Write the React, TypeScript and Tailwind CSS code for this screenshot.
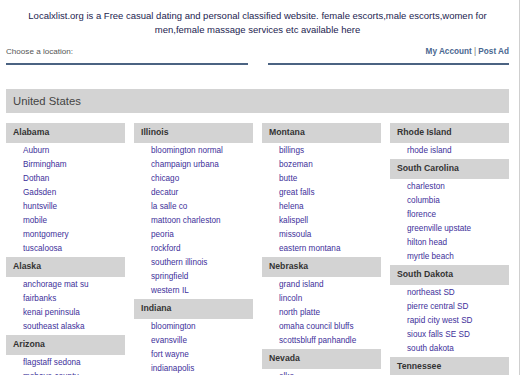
const data: { state: string; cities: string[] }[][] = [
  [
    { state: "Alabama", cities: ["Auburn", "Birmingham", "Dothan", "Gadsden", "huntsville", "mobile", "montgomery", "tuscaloosa"] },
    { state: "Alaska", cities: ["anchorage mat su", "fairbanks", "kenai peninsula", "southeast alaska"] },
    { state: "Arizona", cities: ["flagstaff sedona", "mohave county", "phoenix"] },
  ],
  [
    {
      state: "Illinois",
      cities: ["bloomington normal", "champaign urbana", "chicago", "decatur", "la salle co", "mattoon charleston", "peoria", "rockford", "southern illinois", "springfield", "western IL"],
    },
    { state: "Indiana", cities: ["bloomington", "evansville", "fort wayne", "indianapolis", "kokomo"] },
  ],
  [
    { state: "Montana", cities: ["billings", "bozeman", "butte", "great falls", "helena", "kalispell", "missoula", "eastern montana"] },
    { state: "Nebraska", cities: ["grand island", "lincoln", "north platte", "omaha council bluffs", "scottsbluff panhandle"] },
    { state: "Nevada", cities: ["elko", "las vegas"] },
  ],
  [
    { state: "Rhode Island", cities: ["rhode island"] },
    { state: "South Carolina", cities: ["charleston", "columbia", "florence", "greenville upstate", "hilton head", "myrtle beach"] },
    { state: "South Dakota", cities: ["northeast SD", "pierre central SD", "rapid city west SD", "sioux falls SE SD", "south dakota"] },
    { state: "Tennessee", cities: ["chattanooga", "clarksville"] },
  ],
];

const App: React.FC = () => {
  return (
    <div className="h-[375px] w-[521px] overflow-hidden bg-white font-['Liberation_Sans',Arial,sans-serif]">
      <div className="h-full w-[520px] border-r border-[#cfcfcf] pl-[6px] pr-[10px]">
        {/* intro */}
        <p className="pt-[9px] text-center text-[9.5px] leading-[14px] text-[#23234f]">
          Localxlist.org is a Free casual dating and personal classified website. female escorts,male escorts,women for
          <br />
          men,female massage services etc available here
        </p>

        {/* location bar */}
        <div className="mt-[9px] flex gap-[20px]">
          <div className="w-[242px] border-b-2 border-[#4b6382] pb-[5px] text-[8.1px] leading-[12px] text-[#555]">
            Choose a location:
          </div>
          <div className="w-[242px] border-b-2 border-[#4b6382] pb-[5px] text-right text-[8.2px] font-bold leading-[12px] text-[#4a6790]">
            My Account <span className="font-normal text-[#777]">|</span> Post Ad
          </div>
        </div>

        {/* country */}
        <div className="mt-[24px] flex h-[24px] items-center bg-[#d3d3d3] pl-[7px] text-[11.3px] text-[#444]">
          United States
        </div>

        <div className="mt-[10px] grid grid-cols-4 gap-x-[9px]">
          {data.map((col, i) => (
            <div key={i} className="flex flex-col">
              {col.map((s, j) => (
                <div key={s.state} className={j === 0 ? "" : "mt-[1px]"}>
                  <div className="flex h-[20px] items-center bg-[#d3d3d3] pl-[7px] text-[8.7px] font-bold text-[#333]">
                    {s.state}
                  </div>
                  <ul className="pt-[1px]">
                    {s.cities.map((c) => (
                      <li key={c} className="h-[14px] pl-[17px] text-[8.2px] leading-[14px] text-[#40309a]">
                        {c}
                      </li>
                    ))}
                  </ul>
                </div>
              ))}
            </div>
          ))}
        </div>
      </div>
    </div>
  );
};

export default App;
